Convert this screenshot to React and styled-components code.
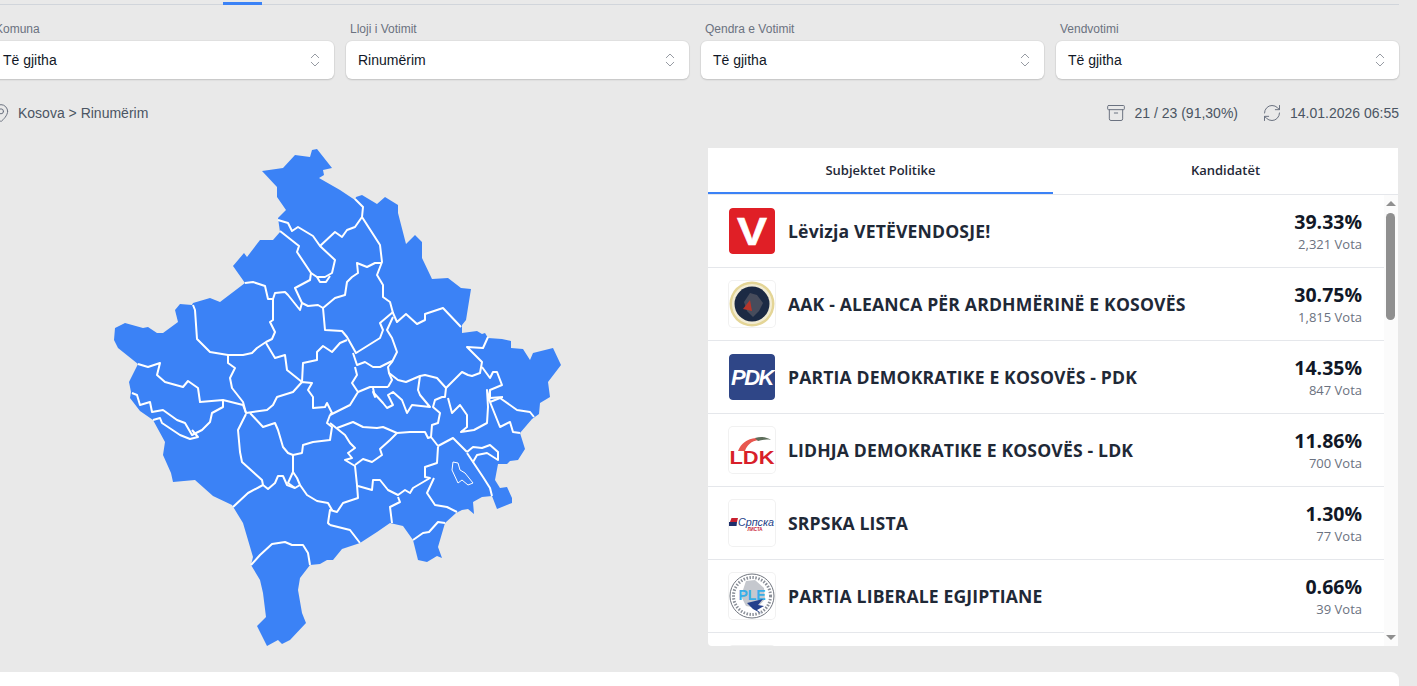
import styled, { createGlobalStyle } from "styled-components";
import { Archive, ChevronsUpDown, MapPin, RefreshCw } from "lucide-react";

const GlobalStyle = createGlobalStyle`
  html, body {
    margin: 0;
    height: 100%;
    overflow: hidden;
    background: #e9e9e9;
  }
  * { box-sizing: border-box; }
`;

const filters = [
  { label: "Komuna", value: "Të gjitha" },
  { label: "Lloji i Votimit", value: "Rinumërim" },
  { label: "Qendra e Votimit", value: "Të gjitha" },
  { label: "Vendvotimi", value: "Të gjitha" },
];

const parties = [
  { id: "v", name: "Lëvizja VETËVENDOSJE!", pct: "39.33%", votes: "2,321 Vota" },
  { id: "aak", name: "AAK - ALEANCA PËR ARDHMËRINË E KOSOVËS", pct: "30.75%", votes: "1,815 Vota" },
  { id: "pdk", name: "PARTIA DEMOKRATIKE E KOSOVËS - PDK", pct: "14.35%", votes: "847 Vota" },
  { id: "ldk", name: "LIDHJA DEMOKRATIKE E KOSOVËS - LDK", pct: "11.86%", votes: "700 Vota" },
  { id: "srpska", name: "SRPSKA LISTA", pct: "1.30%", votes: "77 Vota" },
  { id: "ple", name: "PARTIA LIBERALE EGJIPTIANE", pct: "0.66%", votes: "39 Vota" },
];

const outline =
  "M262 171 283 168 295 155 310 157 312 150 317 149 332 168 323 170 324 175 319 178 340 190 355 200 356 197 362 195 377 204 385 197 398 205 398 213 406 244 415 235 422 242 422 258 432 279 448 278 461 288 471 289 466 320 462 325 462 333 477 331 482 334 485 333 488 338 502 339 511 341 511 348 523 349 530 360 533 353 553 348 561 365 548 382 550 397 540 403 539 414 532 419 520 433 525 449 518 460 510 461 507 464 498 464 495 480 500 488 507 487 512 498 512 503 497 509 492 496 482 497 473 502 474 514 468 509 462 510 456 513 445 523 438 547 442 558 437 556 427 562 418 560 413 540 403 526 390 523 377 532 360 543 342 549 333 560 327 560 320 564 310 565 300 578 298 590 302 613 306 623 290 640 282 644 278 640 267 646 257 626 266 617 263 593 260 580 251 565 253 557 243 523 232 505 213 496 195 480 173 482 171 473 163 455 165 442 153 420 140 411 130 398 131 392 129 382 138 364 118 348 114 340 115 328 125 323 143 328 148 327 157 333 163 333 178 322 175 310 180 304 192 305 193 303 210 298 220 302 245 283 233 266 244 253 247 257 260 240 273 240 280 232 278 218 286 210 277 197 277 187Z";

const borders = [
  "M278 220 288 223 292 231 298 227 313 236 320 246 335 232 342 237 347 230 355 227 362 217 363 207 355 199",
  "M280 231 299 246 297 252 311 273 310 280 295 288 302 303 300 310 288 295 285 292 275 293 273 299 268 299 265 286 253 282 245 283",
  "M320 246 335 260 332 273 325 277 317 277 311 273",
  "M317 277 320 282 326 282 330 276",
  "M273 299 273 320 270 322 275 332 272 339 266 342 257 348 252 353 243 355 228 355 210 352 197 339 195 310 193 305",
  "M266 343 275 358 285 355 287 370 302 382",
  "M228 355 228 363 235 368 230 378 232 388 243 402 246 413",
  "M302 382 303 363 317 360 317 352 323 346 332 352 340 343 347 340",
  "M302 303 308 306 318 305 323 308 335 298 345 295 347 282 352 277 358 273 357 263 367 267 375 263 382 263",
  "M323 308 325 330 342 331 347 337 356 353 380 338 383 330 380 323 393 312",
  "M362 217 380 245 382 262 377 275 383 285 383 297 390 302 393 313 397 322 406 314 417 324 425 320 425 314 443 308 461 327",
  "M393 317 387 330 392 338 397 352 392 362 388 367 389 373 392 380 388 387",
  "M392 361 380 367 373 367 365 362 357 365 353 353",
  "M355 367 357 375 352 383 358 392 350 405 330 415",
  "M358 392 370 387 388 387",
  "M373 388 375 397 373 392 383 403 387 408 393 405 388 395 393 392 402 400 407 413 412 405 430 407 420 395 418 390 420 376",
  "M389 373 398 380 406 382 420 376 425 375 437 378 446 388 462 372 468 375 472 376 480 373 482 362 467 347 483 348 488 337",
  "M482 367 490 378 493 372 497 372 502 385 490 390 490 398 503 397",
  "M446 388 445 397 442 397 435 400 433 407 440 413 438 423 432 425 431 437 438 446 453 438 467 452",
  "M448 398 452 413 460 405 467 415 467 427 461 432 474 430 487 423 488 407 487 390 490 402 500 427 510 422 513 432 520 433",
  "M490 402 500 398 517 410 530 412 534 417",
  "M330 423 345 435 350 443 355 448 348 453 352 458 345 460 355 466 357 485 358 498 343 503 337 512 330 510",
  "M337 428 353 422 363 427 377 428 383 427 397 433 390 440 380 449 382 455 372 462 363 459 355 465",
  "M397 433 410 432 425 432 428 438 431 437",
  "M438 447 437 463 425 467 425 477 430 478 413 488 410 493 405 490 398 495 388 490 380 480 373 480 372 490 358 486",
  "M434 478 427 493 435 505 447 507 457 512",
  "M398 497 400 502 390 507 392 523",
  "M445 523 438 522 429 532 423 533 413 540",
  "M330 525 350 530 360 543",
  "M467 452 473 447 482 448 490 445 498 452 498 460 487 453 477 455 473 462 467 453",
  "M473 462 483 477 490 488 492 496",
  "M132 393 137 395 140 405 150 402 152 412 163 410 177 420 185 423 192 435 202 430 210 422 212 413 223 407 223 400 200 402 198 388 188 381 183 387 165 382 157 375 160 363 148 367 138 364",
  "M153 420 160 418 162 423 180 435 190 439 198 437 192 430",
  "M223 400 243 405 246 413 267 410 273 405 277 397 293 392 302 382 312 383 308 390 313 397 313 408 325 407 327 403 332 413 330 415",
  "M246 414 244 418 238 430 240 452 242 462 262 480 263 485 248 493 233 507",
  "M250 413 263 427 275 423 278 430 283 447 288 453 293 455 302 453 303 445 313 442 330 440 332 427 327 423 330 415",
  "M293 455 293 472 288 483 295 488 300 485 297 478 293 472",
  "M263 485 268 489 275 483 278 476 283 476 287 485 295 488",
  "M300 485 307 495 317 501 328 503 332 510 330 510 328 523 330 525",
  "M251 565 260 555 272 544 285 542 292 545 303 545 308 553 310 565",
];

const lake = "M453 462 458 463 460 470 465 473 473 483 468 485 462 480 458 483 452 470Z";

const KosovoMap = () => (
  <MapSvg viewBox="100 140 470 510" aria-label="Harta e Kosovës">
    <path d={outline} fill="#3b82f6" />
    {borders.map((d) => (
      <path key={d} d={d} fill="none" stroke="#fff" strokeWidth="2" strokeLinejoin="round" />
    ))}
    <path d={lake} fill="#3b82f6" stroke="#fff" strokeWidth="1" />
  </MapSvg>
);

const PartyLogo = ({ id }) => {
  if (id === "v") {
    return (
      <LogoSvg viewBox="0 0 46 46">
        <rect width="46" height="46" rx="3" fill="#e01f26" />
        <text x="23" y="37" textAnchor="middle" textLength="30" lengthAdjust="spacingAndGlyphs" fontFamily="Liberation Sans, sans-serif" fontWeight="700" fontSize="39" stroke="#fff" strokeWidth="0.6" fill="#fff">
          V
        </text>
      </LogoSvg>
    );
  }
  if (id === "aak") {
    return (
      <LogoSvg viewBox="0 0 46 46">
        <circle cx="23" cy="23" r="22.5" fill="#e4d596" />
        <circle cx="23" cy="23" r="20" fill="#f2ecd4" />
        <circle cx="23" cy="23" r="17.5" fill="#1c2a44" />
        <path d="M15 21 21 12 28 14 34 22 30 30 24 36 18 30Z" fill="#474c5c" />
        <path d="M14 28 21 19 23 30Z" fill="#b8362b" />
      </LogoSvg>
    );
  }
  if (id === "pdk") {
    return (
      <LogoSvg viewBox="0 0 46 46">
        <rect width="46" height="46" rx="3" fill="#2f4687" />
        <text x="23" y="31" textAnchor="middle" fontFamily="Liberation Sans, sans-serif" fontWeight="700" fontStyle="italic" fontSize="22" letterSpacing="-1.5" fill="#fff">
          PDK
        </text>
      </LogoSvg>
    );
  }
  if (id === "ldk") {
    return (
      <LogoSvg viewBox="0 0 46 46">
        <path d="M9 24C12 16 18 12 27 11L30 13C22 14 18 18 16 24Z" fill="#e8574f" />
        <path d="M26 11C32 9 38 10 42 13 37 12 33 13 29 14Z" fill="#5d6d5a" />
        <text x="23" y="37" textAnchor="middle" textLength="45" lengthAdjust="spacingAndGlyphs" fontFamily="Liberation Sans, sans-serif" fontWeight="700" fontSize="18.5" fill="#d81f2a">
          LDK
        </text>
      </LogoSvg>
    );
  }
  if (id === "srpska") {
    return (
      <LogoSvg viewBox="0 0 46 46">
        <path d="M1 22 2.500 18H9L8 22Z" fill="#c8202f" />
        <path d="M0 22H8L7.500 26H0Z" fill="#1e2f6b" />
        <text x="9" y="26" textLength="36" lengthAdjust="spacingAndGlyphs" fontFamily="Liberation Sans, sans-serif" fontStyle="italic" fontSize="11" fill="#1e3f8a">
          Српска
        </text>
        <text x="26" y="31" textAnchor="middle" fontFamily="Liberation Sans, sans-serif" fontWeight="700" fontSize="4.5" fill="#c8202f">
          ЛИСТА
        </text>
      </LogoSvg>
    );
  }
  return (
    <LogoSvg viewBox="0 0 46 46">
      <circle cx="23" cy="23" r="22" fill="#fff" stroke="#70757e" strokeWidth="1" />
      <circle cx="23" cy="23" r="18.500" fill="none" stroke="#8a8f98" strokeWidth="3" strokeDasharray="1.500 1.500" />
      <path d="M17 8 26 7 35 15 36 26 28 35 17 33 12 23Z" fill="#c5c8ce" />
      <text x="23" y="27" textAnchor="middle" fontFamily="Liberation Sans, sans-serif" fontWeight="700" fontSize="14" fill="#38aee8">
        PLE
      </text>
      <path d="M18 30 34 26 29 32 35 33 28 37 33 41 24 36Z" fill="#24408c" />
    </LogoSvg>
  );
};

const App = () => (
  <Page>
    <GlobalStyle />
    <TabsBar>
      <ActiveTabMark />
    </TabsBar>
    <Filters>
      {filters.map((f) => (
        <Field key={f.label}>
          <FieldLabel>{f.label}</FieldLabel>
          <SelectBox>
            <span>{f.value}</span>
            <ChevronsUpDown size={18} strokeWidth={1.2} color="#8b9099" />
          </SelectBox>
        </Field>
      ))}
    </Filters>
    <InfoBar>
      <Crumb>
        <MapPin size={20} strokeWidth={1.2} color="#6b7280" />
        <span>Kosova &gt; Rinumërim</span>
      </Crumb>
      <Meta>
        <MetaItem>
          <Archive size={20} strokeWidth={1.2} color="#6b7280" />
          <span>21 / 23 (91,30%)</span>
        </MetaItem>
        <MetaItem>
          <RefreshCw size={20} strokeWidth={1.2} color="#6b7280" />
          <span>14.01.2026 06:55</span>
        </MetaItem>
      </Meta>
    </InfoBar>
    <Main>
      <MapColumn>
        <KosovoMap />
      </MapColumn>
      <Panel>
        <PanelTabs>
          <PanelTab $active>Subjektet Politike</PanelTab>
          <PanelTab>Kandidatët</PanelTab>
        </PanelTabs>
        <ListArea>
          <List>
            {parties.map((p) => (
              <Row key={p.id}>
                <LogoBox $flat={p.id === "v" || p.id === "pdk"}>
                  <PartyLogo id={p.id} />
                </LogoBox>
                <PartyName>{p.name}</PartyName>
                <Score>
                  <Percent>{p.pct}</Percent>
                  <Votes>{p.votes}</Votes>
                </Score>
              </Row>
            ))}
            <Row>
              <LogoBox />
            </Row>
          </List>
          <ScrollTrack>
            <ArrowUp />
            <ScrollThumb />
            <ArrowDown />
          </ScrollTrack>
        </ListArea>
      </Panel>
    </Main>
    <BottomCard />
  </Page>
);

export default App;

const Page = styled.div`
  width: 1408px;
  margin-left: -9px;
  font-family: "Liberation Sans", Arial, sans-serif;
`;

const TabsBar = styled.div`
  height: 5px;
  padding: 2px 0 0 232px;
  border-bottom: 1px solid #d1d5db;
`;

const ActiveTabMark = styled.div`
  width: 39px;
  height: 3px;
  background: #3b82f6;
`;

const Filters = styled.div`
  display: grid;
  grid-template-columns: repeat(4, 1fr);
  gap: 12px;
  margin-top: 18px;
`;

const Field = styled.div`
  display: flex;
  flex-direction: column;
  gap: 5px;
`;

const FieldLabel = styled.label`
  height: 13px;
  padding-left: 4px;
  font-size: 12px;
  line-height: 13px;
  color: #6b7280;
`;

const SelectBox = styled.div`
  display: flex;
  align-items: center;
  justify-content: space-between;
  height: 38px;
  padding: 0 10px 0 12px;
  background: #fff;
  border-radius: 6px;
  box-shadow: 0 0 0 1px rgba(0, 0, 0, 0.03), 0 1px 2px rgba(0, 0, 0, 0.14);
  font-size: 14px;
  color: #111827;
`;

const InfoBar = styled.div`
  display: flex;
  align-items: center;
  justify-content: space-between;
  height: 20px;
  margin-top: 24px;
  font-size: 14px;
  color: #4b5563;
`;

const Crumb = styled.div`
  display: flex;
  align-items: center;
  gap: 7px;
`;

const Meta = styled.div`
  display: flex;
  align-items: center;
  gap: 24px;
`;

const MetaItem = styled.div`
  display: flex;
  align-items: center;
  gap: 8px;
`;

const Main = styled.div`
  display: flex;
  margin-top: 25px;
`;

const MapColumn = styled.div`
  width: 717px;
  height: 498px;
  padding-left: 109px;
  margin-top: -8px;
`;

const MapSvg = styled.svg`
  display: block;
  width: 470px;
  height: 510px;
`;

const Panel = styled.section`
  width: 690px;
  height: 498px;
  display: flex;
  flex-direction: column;
  background: #fff;
  border-radius: 0 0 4px 4px;
  font-family: "Open Sans", sans-serif;
`;

const PanelTabs = styled.div`
  display: grid;
  grid-template-columns: 345px 345px;
  height: 47px;
  border-bottom: 1px solid #e5e7eb;
`;

const PanelTab = styled.button`
  height: 46px;
  padding: 0;
  background: none;
  border: 0;
  border-bottom: 2px solid ${(p) => (p.$active ? "#3b82f6" : "transparent")};
  font-family: inherit;
  font-size: 13px;
  font-weight: 600;
  color: #1f2937;
`;

const ListArea = styled.div`
  position: relative;
  flex: 1;
  min-height: 0;
  overflow: hidden;
`;

const List = styled.div`
  width: 676px;
`;

const Row = styled.div`
  display: flex;
  align-items: center;
  height: 73px;
  padding: 0 22px 0 21px;
  border-bottom: 1px solid #e5e7eb;
`;

const LogoBox = styled.div`
  flex: none;
  width: 46px;
  height: 46px;
  margin: 4px 13px 4px 0;
  background: #fff;
  border-radius: 4px;
  box-shadow: ${(p) => (p.$flat ? "none" : "0 0 0 1px #f1f1f1")};
  overflow: hidden;
`;

const LogoSvg = styled.svg`
  display: block;
  width: 46px;
  height: 46px;
`;

const PartyName = styled.div`
  flex: 1;
  font-size: 17.6px;
  font-weight: 700;
  letter-spacing: 0.15px;
  color: #1f2937;
  white-space: nowrap;
`;

const Score = styled.div`
  padding-top: 1px;
  text-align: right;
`;

const Percent = styled.div`
  font-size: 19.500px;
  line-height: 24px;
  font-weight: 700;
  color: #111827;
`;

const Votes = styled.div`
  margin-top: 1px;
  font-size: 13px;
  line-height: 18px;
  color: #6b7280;
`;

const ScrollTrack = styled.div`
  position: absolute;
  top: 0;
  right: 0;
  bottom: 0;
  width: 14px;
  background: #fbfbfb;
`;

const ScrollThumb = styled.div`
  position: absolute;
  top: 18px;
  left: 2px;
  width: 9px;
  height: 107px;
  border-radius: 5px;
  background: #8f8f8f;
`;

const ArrowUp = styled.div`
  position: absolute;
  top: 6px;
  left: 2px;
  border-left: 5px solid transparent;
  border-right: 5px solid transparent;
  border-bottom: 5px solid #8f8f8f;
`;

const ArrowDown = styled.div`
  position: absolute;
  bottom: 6px;
  left: 2px;
  border-left: 5px solid transparent;
  border-right: 5px solid transparent;
  border-top: 5px solid #8f8f8f;
`;

const BottomCard = styled.div`
  height: 14px;
  margin-top: 26px;
  background: #fff;
  border-radius: 8px 8px 0 0;
`;
